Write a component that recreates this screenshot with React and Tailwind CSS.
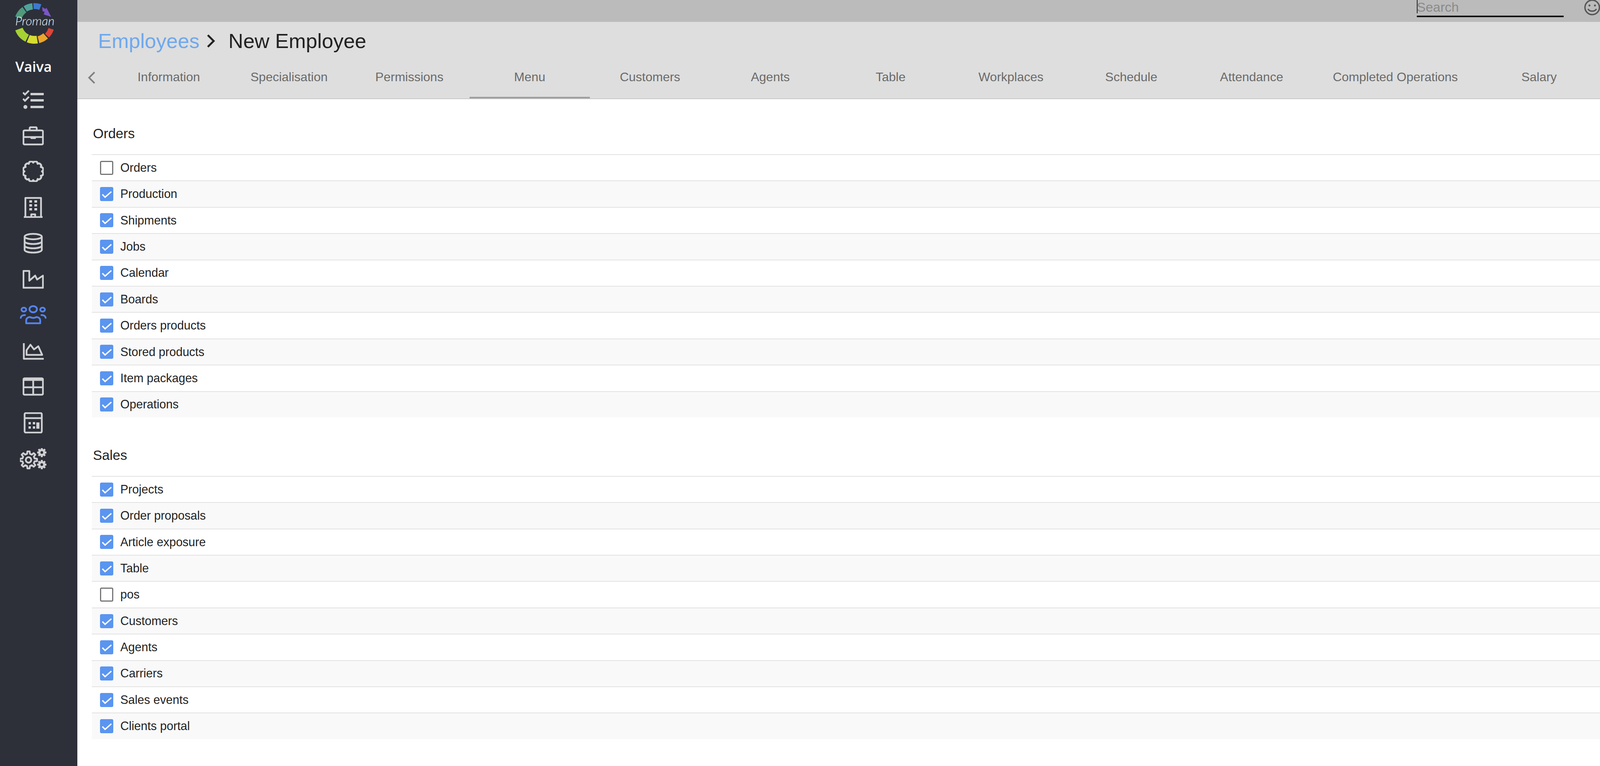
import React from 'react'

const tabs = ['Information', 'Specialisation', 'Permissions', 'Menu', 'Customers', 'Agents', 'Table', 'Workplaces', 'Schedule', 'Attendance', 'Completed Operations', 'Salary', 'Documents']

const sections = [
    {
        title: 'Orders',
        items: [
            ['Orders', false], ['Production', true], ['Shipments', true], ['Jobs', true], ['Calendar', true],
            ['Boards', true], ['Orders products', true], ['Stored products', true], ['Item packages', true], ['Operations', true],
        ],
    },
    {
        title: 'Sales',
        items: [
            ['Projects', true], ['Order proposals', true], ['Article exposure', true], ['Table', true], ['pos', false],
            ['Customers', true], ['Agents', true], ['Carriers', true], ['Sales events', true], ['Clients portal', true],
        ],
    },
]

// ring segment of the logo, angles clockwise from the top
const polar = (a, r) => {
    const t = (a * Math.PI) / 180
    return `${(88 + r * Math.sin(t)).toFixed(1)} ${(60 - r * Math.cos(t)).toFixed(1)}`
}
const arc = (a1, a2, R = 52, r = 35) =>
    `M${polar(a1, R)} A${R} ${R} 0 0 1 ${polar(a2, R)} L${polar(a2, r)} A${r} ${r} 0 0 0 ${polar(a1, r)} Z`

const logoSegments = [
    [-70, -36, '#4f9a7c', 35],
    [-32, -6, '#4fa39b', 36],
    [-3, 20, '#3f78cf', 37],
    [206, 250, '#a6d132', 32],
    [170, 202, '#d6dc31', 32],
    [138, 166, '#eca62a', 34],
    [108, 134, '#e04437', 38],
]

function Logo() {
    return (
        <div className="relative w-[176px] h-[120px]">
            <svg width="176" height="120" viewBox="0 0 176 120">
                {logoSegments.map(([a, b, c, r]) => <path key={a} d={arc(a, b, 52, r)} fill={c} />)}
                <path d="M108 18 L116 23 L119 20 L131 43 L112 37 L114 30 L109 29 Z" fill="#7a56c9" />
            </svg>
            <span className="absolute left-[39px] top-[35px] text-[32px] leading-[36px] italic font-light text-[#f2f2f2] font-['Lato',sans-serif]">Proman</span>
        </div>
    )
}

const scallops = (() => {
    const n = 12
    let d = ''
    for (let i = 0; i <= n; i++) {
        const t = (i / n) * 2 * Math.PI
        const x = (27 + 22.5 * Math.cos(t)).toFixed(1)
        const y = (27 + 22.5 * Math.sin(t)).toFixed(1)
        d += i === 0 ? `M${x} ${y}` : ` A6 6 0 0 1 ${x} ${y}`
    }
    return d + 'Z'
})()

const gear = (cx, cy, R, r, teeth) => {
    const step = (2 * Math.PI) / teeth
    let d = ''
    for (let i = 0; i < teeth; i++) {
        const a = i * step
        const pts = [[a - step * 0.3, r], [a - step * 0.17, R], [a + step * 0.17, R], [a + step * 0.3, r]]
        pts.forEach(([t, q], j) => {
            const x = (cx + q * Math.cos(t)).toFixed(1)
            const y = (cy + q * Math.sin(t)).toFixed(1)
            d += `${i === 0 && j === 0 ? 'M' : 'L'}${x} ${y} `
        })
    }
    return d + 'Z'
}

const Icon = ({ children, w = 54, color = '#cfd0d2' }) => (
    <svg width={w} height="54" viewBox={`0 0 ${w} 54`} fill="none" stroke={color} strokeWidth="4.5" strokeLinejoin="round">
        {children}
    </svg>
)

const navIcons = [
    <Icon key="tasks">
        <rect x="20" y="10" width="34" height="6" rx="1" fill="#cfd0d2" stroke="none" />
        <rect x="20" y="26" width="34" height="6" rx="1" fill="#cfd0d2" stroke="none" />
        <rect x="20" y="43" width="34" height="6" rx="1" fill="#cfd0d2" stroke="none" />
        <path d="M1 9L6 14L16 4M1 25L6 30L16 20" strokeWidth="4.5" strokeLinejoin="miter" />
        <circle cx="7" cy="46" r="5" fill="#cfd0d2" stroke="none" />
    </Icon>,
    <Icon key="briefcase">
        <rect x="2" y="14" width="50" height="36" rx="3" />
        <path d="M18 14V8a2 2 0 0 1 2-2H34a2 2 0 0 1 2 2V14M2 31H52" />
        <rect x="20" y="29" width="14" height="7" rx="2" fill="#cfd0d2" stroke="none" />
    </Icon>,
    <Icon key="certificate">
        <path d={scallops} strokeWidth="5" />
    </Icon>,
    <Icon key="building">
        <path d="M7 52V3H47V52M3 52H51" />
        <path d="M22 52V45H32V52" />
        <path d="M17 12h7M30 12h7M17 22h7M30 22h7M17 32h7M30 32h7" strokeWidth="6" />
    </Icon>,
    <Icon key="database">
        <ellipse cx="27" cy="10" rx="22" ry="7" />
        <path d="M5 10V44C5 48 15 51 27 51S49 48 49 44V10M5 22C5 26 15 29 27 29S49 26 49 22M5 33C5 37 15 40 27 40S49 37 49 33" />
    </Icon>,
    <Icon key="industry">
        <path d="M2 6H17V31L32 18L37 28L52 18V49H2Z" />
    </Icon>,
    <Icon key="users" w={68} color="#5585ee">
        <ellipse cx="34" cy="12" rx="9.5" ry="8" />
        <ellipse cx="10" cy="13" rx="6" ry="5" />
        <ellipse cx="58" cy="13" rx="6" ry="5" />
        <path d="M16 48V41C16 35 21 32 26 32C30 35 38 35 42 32C47 32 52 35 52 41V48Z" />
        <path d="M2 34C3 29 7 27 13 27M66 34C65 29 61 27 55 27" strokeLinecap="round" />
    </Icon>,
    <Icon key="chart">
        <path d="M3 7V47H54" />
        <path d="M10 37V25L20 11L29 23L40 15L50 37Z" />
    </Icon>,
    <Icon key="table">
        <rect x="2" y="5" width="50" height="42" rx="3" />
        <path d="M2 9H52" strokeWidth="5" />
        <path d="M2 28H52M27 9V47" />
    </Icon>,
    <Icon key="calculator">
        <rect x="5" y="2" width="44" height="50" rx="3" />
        <path d="M5 15H49" />
        <path d="M15 28h6M26 28h6M15 39h6M26 39h6" strokeWidth="6" />
        <path d="M39 26V42" strokeWidth="8" />
    </Icon>,
    <Icon key="cogs" w={68}>
        <path d={gear(22, 30, 22, 16, 8)} />
        <circle cx="22" cy="30" r="7" />
        <path d={gear(56, 11, 11, 8, 8)} fill="#cfd0d2" strokeWidth="2" />
        <circle cx="56" cy="11" r="3.5" fill="#2d3039" stroke="none" />
        <path d={gear(56, 42, 11, 8, 8)} fill="#cfd0d2" strokeWidth="2" />
        <circle cx="56" cy="42" r="3.5" fill="#2d3039" stroke="none" />
    </Icon>,
]

function Checkbox({ checked }) {
    if (!checked) return <span className="block w-[34px] h-[36px] rounded-[4px] border-[3px] border-[#757575] bg-white" />
    return (
        <span className="block w-[34px] h-[36px] rounded-[4px] bg-[#5a95f0]">
            <svg width="34" height="36" viewBox="0 0 34 36" fill="none" stroke="#fff" strokeWidth="3.5">
                <path d="M6 19L13 26L29 12" />
            </svg>
        </span>
    )
}

export default function App() {
    return (
        <div className="flex w-[4266px] h-[1962px] overflow-hidden bg-white font-['Liberation_Sans',Arial,sans-serif]">
            <aside className="w-[198px] shrink-0 bg-[#2d3039] flex flex-col">
                <div className="h-[133px]">
                    <Logo />
                </div>
                <div className="h-[76px] text-center text-[36px] leading-[76px] font-semibold text-white font-['Open_Sans',sans-serif] pr-[26px]">Vaiva</div>
                {navIcons.map(icon => (
                    <div key={icon.key} className="h-[92px] flex items-center justify-center pr-[28px]">
                        {icon}
                    </div>
                ))}
            </aside>

            <main className="flex-1 min-w-0 flex flex-col">
                <div className="h-[56px] bg-[#bbbbbb] flex items-start justify-end">
                    <div className="relative w-[376px] h-[44px] border-b-4 border-[#111] mr-[52px]">
                        <input placeholder="Search" className="w-full h-[36px] text-[34px] bg-transparent outline-none placeholder:text-[#8a8a8a]" />
                        <span className="absolute left-0 top-0 w-[2px] h-[34px] bg-[#222]" />
                    </div>
                    <svg width="42" height="40" viewBox="0 0 42 40" fill="none" stroke="#555" strokeWidth="3.5" className="mr-[30px]">
                        <circle cx="21" cy="19" r="18.5" />
                        <circle cx="14" cy="14" r="2.5" fill="#555" stroke="none" />
                        <circle cx="28" cy="14" r="2.5" fill="#555" stroke="none" />
                        <path d="M11 24C15 30 27 30 31 24" strokeLinecap="round" />
                    </svg>
                    <svg width="38" height="38" viewBox="0 0 38 38" fill="none" stroke="#555" strokeWidth="3" className="mr-[33px]">
                        <rect x="1.5" y="0" width="14" height="14" />
                        <rect x="22.5" y="0" width="14" height="14" />
                        <rect x="1.5" y="22" width="14" height="14" />
                        <path d="M7 5h3v4H7zM28 5h3v4h-3zM7 27h3v4H7z" fill="#555" strokeWidth="1" />
                        <path d="M22 21H37V31H28V37H22Z" fill="#555" stroke="none" />
                        <path d="M31 35h3v2h-3zM35 35h2v2h-2z" fill="#555" stroke="none" />
                    </svg>
                    <div className="w-[37px] mr-[31px] pt-[3px] flex flex-col gap-[8px]">
                        <span className="h-[5px] rounded-[1px] bg-[#555]" />
                        <span className="h-[5px] rounded-[1px] bg-[#555]" />
                        <span className="h-[5px] rounded-[1px] bg-[#555]" />
                    </div>
                </div>

                <div className="bg-[#dedede] border-b-[2px] border-[#c8c8c8]">
                    <div className="h-[90px] pl-[53px] pr-[12px] pt-[8px] flex items-center text-[52.5px]">
                        <span className="text-[#6fa8ee]">Employees</span>
                        <svg width="22" height="36" viewBox="0 0 22 36" fill="none" stroke="#222" strokeWidth="5" className="ml-[18px] mr-[34px]">
                            <path d="M3 3L18 18L3 33" />
                        </svg>
                        <span className="text-[#222]">New Employee</span>
                        <svg width="52" height="54" viewBox="0 0 52 54" fill="none" stroke="#d9433a" strokeWidth="5" strokeLinejoin="round" className="ml-auto">
                            <path d="M2 11H50" strokeLinecap="round" />
                            <path d="M17 10C18 4 20 2 24 2H28C32 2 34 4 35 10" strokeWidth="4" />
                            <path d="M6 12L9 48a3 3 0 0 0 3 3H40a3 3 0 0 0 3-3L46 12" />
                        </svg>
                    </div>
                    <div className="h-[106px] flex">
                        <div className="w-[80px] shrink-0 flex items-center pl-[27px]">
                            <svg width="20" height="32" viewBox="0 0 20 32" fill="none" stroke="#808080" strokeWidth="4">
                                <path d="M17 2L3 16L17 30" />
                            </svg>
                        </div>
                        <div className="flex-1 min-w-0 flex overflow-hidden">
                            {tabs.map(t => {
                                const active = t === 'Menu'
                                return (
                                    <div
                                        key={t}
                                        className={`shrink-0 flex items-center justify-center text-[32px] text-[#6a6a6a] border-b-4 whitespace-nowrap ${t === 'Completed Operations' ? 'w-[428px]' : 'w-[308px]'} ${active ? 'border-[#9e9e9e]' : 'border-transparent'}`}
                                    >
                                        {t}
                                    </div>
                                )
                            })}
                        </div>
                        <div className="w-[60px] shrink-0 bg-[#dedede] flex items-center pl-[34px] shadow-[-8px_0_12px_-5px_rgba(0,0,0,0.4)] z-10">
                            <svg width="20" height="32" viewBox="0 0 20 32" fill="none" stroke="#222" strokeWidth="4.5">
                                <path d="M3 2L17 16L3 30" />
                            </svg>
                        </div>
                    </div>
                </div>

                <div className="pl-[37px] pr-[19px] pt-[53px]">
                    {sections.map(s => (
                        <section key={s.title} className="mb-[62px]">
                            <h2 className="text-[35px] leading-[70px] pl-[3px] mb-[18px] text-[#222]">{s.title}</h2>
                            <div>
                                {s.items.map(([label, checked], i) => (
                                    <div key={label} className={`h-[67.4px] flex items-center gap-[18px] pl-[21px] border-t-[2.5px] border-[#e2e2e2] text-[30.5px] text-[#222] ${i % 2 ? 'bg-[#f9f9f9]' : 'bg-white'}`}>
                                        <Checkbox checked={checked} />
                                        <span>{label}</span>
                                    </div>
                                ))}
                            </div>
                        </section>
                    ))}
                </div>
            </main>
        </div>
    )
}
